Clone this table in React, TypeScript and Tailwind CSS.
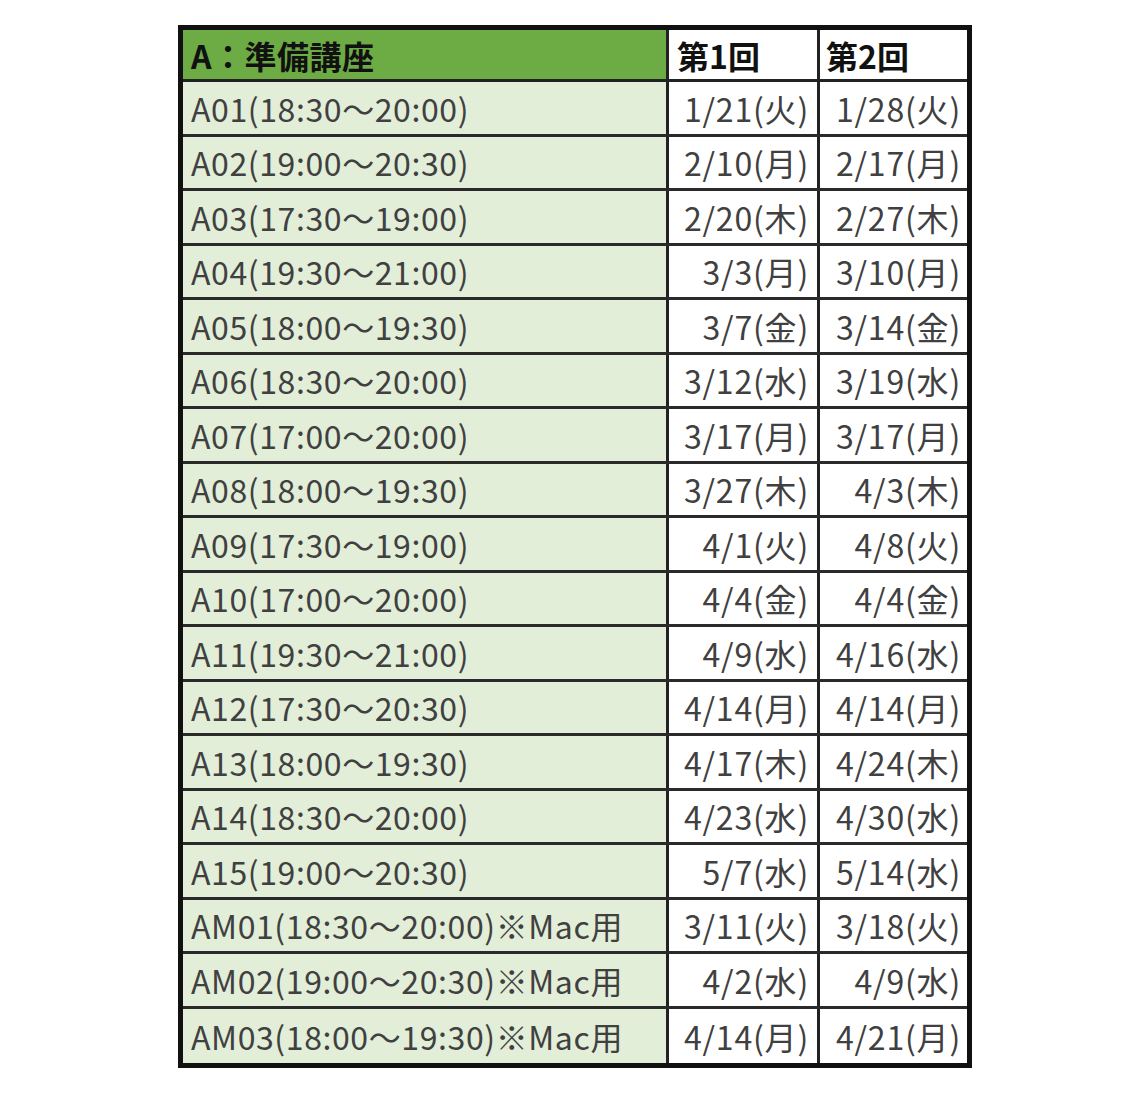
import React from "react";

const rows: [string, string, string][] = [
  ["A01(18:30～20:00)", "1/21(火)", "1/28(火)"],
  ["A02(19:00～20:30)", "2/10(月)", "2/17(月)"],
  ["A03(17:30～19:00)", "2/20(木)", "2/27(木)"],
  ["A04(19:30～21:00)", "3/3(月)", "3/10(月)"],
  ["A05(18:00～19:30)", "3/7(金)", "3/14(金)"],
  ["A06(18:30～20:00)", "3/12(水)", "3/19(水)"],
  ["A07(17:00～20:00)", "3/17(月)", "3/17(月)"],
  ["A08(18:00～19:30)", "3/27(木)", "4/3(木)"],
  ["A09(17:30～19:00)", "4/1(火)", "4/8(火)"],
  ["A10(17:00～20:00)", "4/4(金)", "4/4(金)"],
  ["A11(19:30～21:00)", "4/9(水)", "4/16(水)"],
  ["A12(17:30～20:30)", "4/14(月)", "4/14(月)"],
  ["A13(18:00～19:30)", "4/17(木)", "4/24(木)"],
  ["A14(18:30～20:00)", "4/23(水)", "4/30(水)"],
  ["A15(19:00～20:30)", "5/7(水)", "5/14(水)"],
  ["AM01(18:30～20:00)※Mac用", "3/11(火)", "3/18(火)"],
  ["AM02(19:00～20:30)※Mac用", "4/2(水)", "4/9(水)"],
  ["AM03(18:00～19:30)※Mac用", "4/14(月)", "4/21(月)"],
];

export default function App() {
  return (
    <div
      className="w-[1140px] h-[1094px] bg-white pt-[25px] pl-[178px]"
      style={{ fontFamily: '"Noto Sans CJK JP", "Noto Sans", sans-serif' }}
    >
      <div className="w-[794px] border-[5px] border-[#111] flex flex-col">
        <div className="flex h-[52px] border-b-[3px] border-[#222] box-border">
          <div className="w-[486px] shrink-0 bg-[#6dab45] border-r-[3px] border-[#222] flex items-center pl-[8px] text-[32px] font-bold text-[#111] leading-none tracking-[0.5px]">
            A：準備講座
          </div>
          <div className="w-[151px] shrink-0 border-r-[3px] border-[#222] flex items-center pl-[8px] text-[32px] font-bold text-[#111] leading-none">
            第1回
          </div>
          <div className="flex-1 flex items-center pl-[6px] text-[32px] font-bold text-[#111] leading-none">
            第2回
          </div>
        </div>
        {rows.map((r, i) => (
          <div
            key={i}
            className={
              "flex h-[54.5px] box-border " +
              (i < rows.length - 1 ? "border-b-[3px] border-[#2a2a2a]" : "")
            }
          >
            <div className="w-[486px] shrink-0 bg-[#e2eed8] border-r-[3px] border-[#222] flex items-center pl-[8px] text-[32px] text-[#404040] leading-none tracking-[0.6px]">
              {r[0]}
            </div>
            <div className="w-[151px] shrink-0 border-r-[3px] border-[#222] flex items-center justify-end pr-[8px] text-[32px] text-[#404040] leading-none tracking-[0.8px]">
              {r[1]}
            </div>
            <div className="flex-1 flex items-center justify-end pr-[6px] text-[32px] text-[#404040] leading-none tracking-[0.8px]">
              {r[2]}
            </div>
          </div>
        ))}
      </div>
    </div>
  );
}
